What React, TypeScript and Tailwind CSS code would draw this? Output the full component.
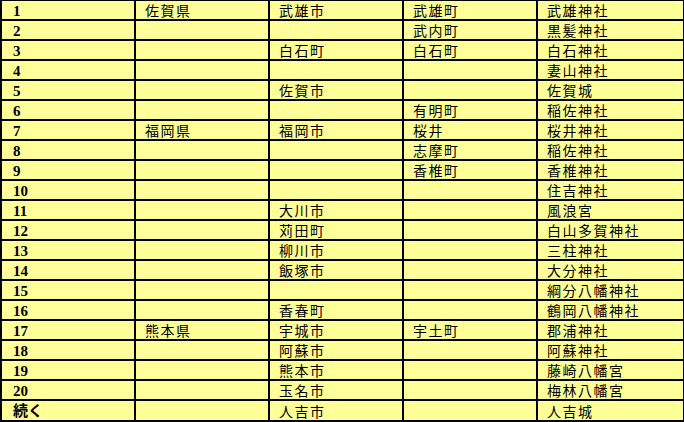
const rows: string[][] = [
  ["1", "佐賀県", "武雄市", "武雄町", "武雄神社"],
  ["2", "", "", "武内町", "黒髪神社"],
  ["3", "", "白石町", "白石町", "白石神社"],
  ["4", "", "", "", "妻山神社"],
  ["5", "", "佐賀市", "", "佐賀城"],
  ["6", "", "", "有明町", "稲佐神社"],
  ["7", "福岡県", "福岡市", "桜井", "桜井神社"],
  ["8", "", "", "志摩町", "稲佐神社"],
  ["9", "", "", "香椎町", "香椎神社"],
  ["10", "", "", "", "住吉神社"],
  ["11", "", "大川市", "", "風浪宮"],
  ["12", "", "苅田町", "", "白山多賀神社"],
  ["13", "", "柳川市", "", "三柱神社"],
  ["14", "", "飯塚市", "", "大分神社"],
  ["15", "", "", "", "綱分八幡神社"],
  ["16", "", "香春町", "", "鶴岡八幡神社"],
  ["17", "熊本県", "宇城市", "宇土町", "郡浦神社"],
  ["18", "", "阿蘇市", "", "阿蘇神社"],
  ["19", "", "熊本市", "", "藤崎八幡宮"],
  ["20", "", "玉名市", "", "梅林八幡宮"],
  ["続く", "", "人吉市", "", "人吉城"],
];

const App = () => {
  return (
    <div className="w-[684px] h-[422px] bg-white">
      <div className="grid grid-cols-[132px_132px_132px_132px_145px] grid-rows-[repeat(20,18px)_19px] gap-[2px] pt-px pl-[2px] pr-px pb-[2px] bg-black w-[684px] h-[422px]">
        {rows.map((row, i) =>
          row.map((cell, j) =>
            j === 0 ? (
              <div
                key={`${i}-${j}`}
                className="bg-[#ffff99] flex items-center pt-[2px] pl-[11px] text-[15px] font-bold text-black leading-none [font-family:'Liberation_Serif','Noto_Sans_CJK_JP',serif]"
              >
                {cell}
              </div>
            ) : (
              <div
                key={`${i}-${j}`}
                className="bg-[#ffff99] flex items-center pl-[9px] text-[14px] tracking-[1.5px] text-black leading-none [font-family:'Noto_Sans_CJK_JP',sans-serif]"
              >
                {cell}
              </div>
            )
          )
        )}
      </div>
    </div>
  );
};

export default App;
